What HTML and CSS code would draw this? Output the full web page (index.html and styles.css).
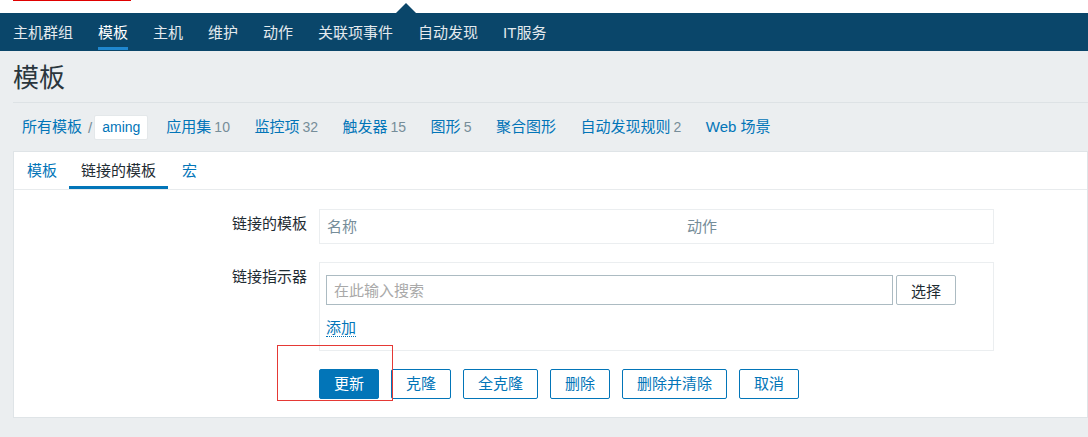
FILE: index.html
```html
<!DOCTYPE html>
<html lang="zh-CN">
<head>
<meta charset="utf-8">
<title>模板</title>
<link rel="stylesheet" href="styles.css">
</head>
<body>
<div class="topbar"></div>
<nav class="nav">
  <span class="nav-notch"></span>
  <a class="nav-item">主机群组</a>
  <a class="nav-item active">模板</a>
  <a class="nav-item">主机</a>
  <a class="nav-item">维护</a>
  <a class="nav-item">动作</a>
  <a class="nav-item">关联项事件</a>
  <a class="nav-item">自动发现</a>
  <a class="nav-item">IT服务</a>
</nav>
<header class="page-header">
  <h1 class="title">模板</h1>
</header>
<div class="crumbs">
  <div class="crumb-path">
    <a class="link">所有模板</a>
    <span class="sep">/</span>
    <span class="current">aming</span>
  </div>
  <div class="crumb-links">
    <a class="link">应用集<span class="count">10</span></a>
    <a class="link">监控项<span class="count">32</span></a>
    <a class="link">触发器<span class="count">15</span></a>
    <a class="link">图形<span class="count">5</span></a>
    <a class="link">聚合图形</a>
    <a class="link">自动发现规则<span class="count">2</span></a>
    <a class="link">Web 场景</a>
  </div>
</div>
<section class="card">
  <div class="tabs">
    <a class="tab">模板</a>
    <a class="tab active">链接的模板</a>
    <a class="tab">宏</a>
  </div>
  <div class="form">
    <label class="label">链接的模板</label>
    <div class="table-box">
      <span class="th">名称</span>
      <span class="th">动作</span>
    </div>
    <label class="label">链接指示器</label>
    <div class="link-box">
      <div class="search-row">
        <input class="search" type="text" placeholder="在此输入搜索">
        <button class="btn-select" type="button">选择</button>
      </div>
      <div class="add-row"><a class="add">添加</a></div>
    </div>
    <div class="buttons">
      <button class="btn primary" type="button">更新</button>
      <button class="btn" type="button">克隆</button>
      <button class="btn" type="button">全克隆</button>
      <button class="btn" type="button">删除</button>
      <button class="btn" type="button">删除并清除</button>
      <button class="btn" type="button">取消</button>
    </div>
  </div>
</section>
<div class="mark-line"></div>
<div class="mark-box"></div>
</body>
</html>
```
FILE: styles.css
```css
* { box-sizing: border-box; }

html, body {
  margin: 0;
  padding: 0;
}

body {
  position: relative;
  background: #ebeef0;
  font-family: "Liberation Sans", Arial, "Noto Sans CJK SC", sans-serif;
  font-size: 15px;
  color: #1f2c33;
  height: 437px;
  overflow: hidden;
}

a { text-decoration: none; cursor: pointer; }

.topbar {
  height: 13px;
  background: #ffffff;
}

.nav {
  position: relative;
  height: 38px;
  background: #0a466a;
  display: flex;
  align-items: stretch;
  gap: 25px;
  padding-left: 13px;
}

.nav-notch {
  position: absolute;
  left: 396px;
  top: -10px;
  width: 0;
  height: 0;
  border-left: 10px solid transparent;
  border-right: 10px solid transparent;
  border-bottom: 10px solid #0a466a;
}

.nav-item {
  position: relative;
  display: flex;
  align-items: center;
  padding-top: 2px;
  color: #e4eaee;
  font-size: 15px;
  line-height: 18px;
}

.nav-item.active {
  color: #ffffff;
}

.nav-item.active::after {
  content: "";
  position: absolute;
  left: 0;
  right: 0;
  bottom: 1px;
  height: 3px;
  background: #1f87cf;
}

.page-header {
  margin-left: 13px;
  border-bottom: 1px solid #dde2e5;
}

.title {
  margin: 0;
  padding: 12px 0 9px 0;
  font-size: 26px;
  line-height: 30px;
  font-weight: normal;
  color: #2a363d;
}

.crumbs {
  height: 48px;
  display: flex;
  align-items: center;
  padding-left: 22px;
}

.crumb-path {
  display: flex;
  align-items: center;
  margin-right: 18px;
}

.link {
  color: #0275b8;
  line-height: 18px;
}

.sep {
  color: #768d99;
  margin: 0 2px 0 6px;
}

.current {
  display: inline-block;
  height: 25px;
  line-height: 23px;
  padding: 0 7px;
  font-size: 14px;
  color: #0275b8;
  background: #ffffff;
  border: 1px solid #e4e8ea;
  border-radius: 2px;
}

.crumb-links {
  display: flex;
  align-items: center;
  gap: 24.5px;
}

.count {
  margin-left: 3px;
  font-size: 14px;
  color: #768d99;
}

.card {
  margin-left: 13px;
  background: #ffffff;
  border: 1px solid #dfe4e7;
  padding-bottom: 18px;
}

.tabs {
  display: flex;
  height: 38px;
  padding-left: 1px;
  border-bottom: 1px solid #e8ebed;
}

.tab {
  height: 37px;
  padding: 4px 12px 0 12px;
  line-height: 30px;
  color: #0275b8;
  border-bottom: 3px solid transparent;
}

.tab.active {
  color: #1f2c33;
  border-bottom-color: #0275b8;
}

.tab.active + .tab {
  padding-left: 14px;
}

.form {
  display: grid;
  grid-template-columns: 293px 675px;
  column-gap: 12px;
  row-gap: 18px;
  padding-top: 19px;
}

.label {
  text-align: right;
  padding-top: 6px;
  line-height: 18px;
  color: #1f2c33;
}

.table-box {
  display: grid;
  grid-template-columns: 360px 1fr;
  height: 35px;
  border: 1px solid #ebeef0;
  padding-left: 7px;
}

.th {
  line-height: 33px;
  color: #768d99;
}

.link-box {
  border: 1px solid #ebeef0;
  padding: 12px 6px 14px 6px;
}

.search-row {
  display: flex;
  align-items: center;
}

.search {
  width: 567px;
  height: 30px;
  margin: 0;
  padding: 0 7px;
  border: 1px solid #acbbc2;
  border-radius: 0;
  font-family: inherit;
  font-size: 15px;
  color: #1f2c33;
  outline: none;
}

.search::placeholder {
  color: #a9a9a9;
}

.btn-select {
  margin-left: 3px;
  width: 60px;
  height: 30px;
  padding: 0;
  border: 1px solid #acbbc2;
  border-radius: 2px;
  background: #ffffff;
  color: #1f2c33;
  font-family: inherit;
  font-size: 15px;
}

.add-row {
  margin-top: 14px;
  height: 17px;
}

.add {
  display: inline-block;
  line-height: 16px;
  color: #0275b8;
  border-bottom: 1px dotted #0275b8;
}

.buttons {
  grid-column: 2;
  display: flex;
  gap: 12px;
}

.btn {
  height: 30px;
  padding: 0 14px;
  border: 1px solid #0275b8;
  border-radius: 2px;
  background: #ffffff;
  color: #0275b8;
  font-family: inherit;
  font-size: 15px;
  line-height: 28px;
}

.btn.primary {
  background: #0275b8;
  color: #ffffff;
}

.mark-line {
  position: absolute;
  left: 13px;
  top: 0;
  width: 118px;
  height: 1px;
  background: #e00000;
}

.mark-box {
  position: absolute;
  left: 277px;
  top: 345px;
  width: 116px;
  height: 56px;
  border: 1px solid #e53935;
}
```
